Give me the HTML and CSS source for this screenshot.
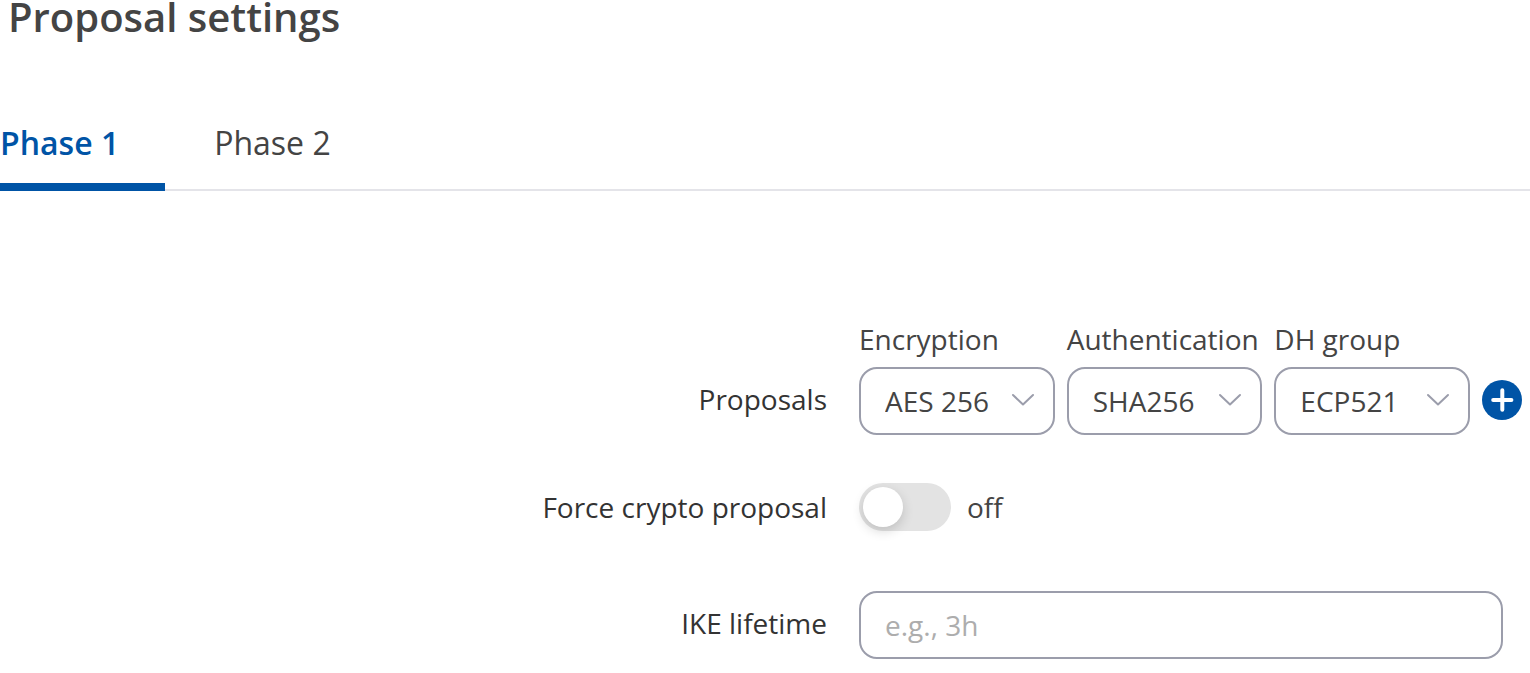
FILE: index.html
```html
<!DOCTYPE html>
<html lang="en">
<head>
    <meta charset="UTF-8">
    <meta name="viewport" content="width=device-width, initial-scale=1.0">
    <title>Proposal settings</title>
    <link rel="stylesheet" href="styles.css">
</head>
<body>
    <h1>Proposal settings</h1>
    <div class="tabs" role="tablist">
        <button class="tab active" role="tab" aria-selected="true">Phase 1</button>
        <button class="tab" role="tab" aria-selected="false">Phase 2</button>
    </div>
    <form class="settings">
        <div class="row proposals-row">
            <span class="row-label" id="proposals-label">Proposals</span>
            <div class="proposals" role="group" aria-labelledby="proposals-label">
                <div class="field">
                    <label for="encryption">Encryption</label>
                    <div class="select-box">
                        <select id="encryption">
                            <option>AES 256</option>
                        </select>
                        <svg class="chevron" viewBox="0 0 24 14"><path d="M2 2 12 11.5 22 2"/></svg>
                    </div>
                </div>
                <div class="field">
                    <label for="authentication">Authentication</label>
                    <div class="select-box">
                        <select id="authentication">
                            <option>SHA256</option>
                        </select>
                        <svg class="chevron" viewBox="0 0 24 14"><path d="M2 2 12 11.5 22 2"/></svg>
                    </div>
                </div>
                <div class="field">
                    <label for="dh-group">DH group</label>
                    <div class="select-box">
                        <select id="dh-group">
                            <option>ECP521</option>
                        </select>
                        <svg class="chevron" viewBox="0 0 24 14"><path d="M2 2 12 11.5 22 2"/></svg>
                    </div>
                </div>
                <button type="button" class="add" aria-label="Add proposal">
                    <svg viewBox="0 0 40 40"><path d="M20.3 10.2v19.6M11.2 20h18.2"/></svg>
                </button>
            </div>
        </div>
        <div class="row switch-row">
            <label class="row-label" for="force">Force crypto proposal</label>
            <div class="switch">
                <input type="checkbox" id="force">
                <span>off</span>
            </div>
        </div>
        <div class="row input-row">
            <label class="row-label" for="lifetime">IKE lifetime</label>
            <input type="text" class="text-input" id="lifetime" placeholder="e.g., 3h">
        </div>
    </form>
</body>
</html>
```
FILE: styles.css
```css
* {
    box-sizing: border-box;
}

body {
    margin: 0;
    font-family: "Open Sans", sans-serif;
    font-size: 28px;
    line-height: 38px;
    color: #444;
    background: #fff;
}

h1 {
    margin: 0;
    padding: 0 8px;
    font-size: 40px;
    line-height: 34px;
    font-weight: 600;
}

button,
select,
input {
    font-family: inherit;
    font-size: inherit;
    color: inherit;
}

/* tabs */
.tabs {
    display: flex;
    gap: 49px;
    margin-top: 61px;
    box-shadow: inset 0 -2px #e4e4e9;
}

.tab {
    padding: 29px 46px 21px 0;
    border: none;
    border-bottom: 8px solid transparent;
    background: none;
    font-size: 32px;
    line-height: 38px;
    cursor: pointer;
}

.tab.active {
    border-color: #0054a6;
    color: #0054a6;
    font-weight: 600;
}

/* form */
.settings {
    display: flex;
    flex-direction: column;
    gap: 48px;
    padding-top: 129px;
}

.row {
    display: grid;
    grid-template-columns: 827fr 671fr;
    column-gap: 32px;
    align-items: center;
}

.row-label {
    color: #333;
    text-align: right;
}

.proposals-row {
    align-items: end;
}

.proposals-row .row-label {
    padding-bottom: 4px;
    line-height: 64px;
}

.switch-row {
    margin-bottom: 12px;
}

.input-row .row-label {
    padding-bottom: 4px;
}

.proposals {
    display: flex;
    align-items: flex-end;
    gap: 12px;
    margin-right: 8px;
}

.field {
    flex: 1;
    min-width: 0;
}

.field label {
    display: block;
    margin-bottom: 9px;
    white-space: nowrap;
}

.select-box {
    position: relative;
}

select,
.text-input {
    height: 68px;
    padding: 0 24px;
    border: 2px solid #9b9dab;
    border-radius: 18px;
    background: #fff;
    appearance: none;
}

select {
    width: 100%;
}

.text-input {
    min-width: 0;
    margin-right: 27px;
}

.text-input::placeholder {
    color: #adadad;
}

.chevron {
    position: absolute;
    top: 26px;
    right: 20px;
    width: 24px;
    height: 14px;
    fill: none;
    stroke: #9b9dab;
    stroke-width: 2;
    stroke-linecap: round;
    stroke-linejoin: round;
    pointer-events: none;
}

.add {
    flex: none;
    width: 40px;
    height: 40px;
    margin-bottom: 15px;
    padding: 0;
    border: none;
    border-radius: 50%;
    background: #0054a6;
    cursor: pointer;
}

.add svg {
    display: block;
    fill: none;
    stroke: #fff;
    stroke-width: 4;
    stroke-linecap: round;
}

/* switch */
.switch {
    display: flex;
    align-items: center;
    gap: 16px;
}

.switch input {
    appearance: none;
    width: 92px;
    height: 48px;
    margin: 0;
    padding: 4px;
    border-radius: 24px;
    background: #e3e3e3;
    cursor: pointer;
}

.switch input::before {
    content: "";
    display: block;
    width: 40px;
    height: 40px;
    border-radius: 50%;
    background: #fff;
    box-shadow: 0 4px 12px rgba(0, 0, 0, 0.16);
}

.switch input:checked {
    background: #0054a6;
}

.switch input:checked::before {
    margin-left: auto;
}
```
